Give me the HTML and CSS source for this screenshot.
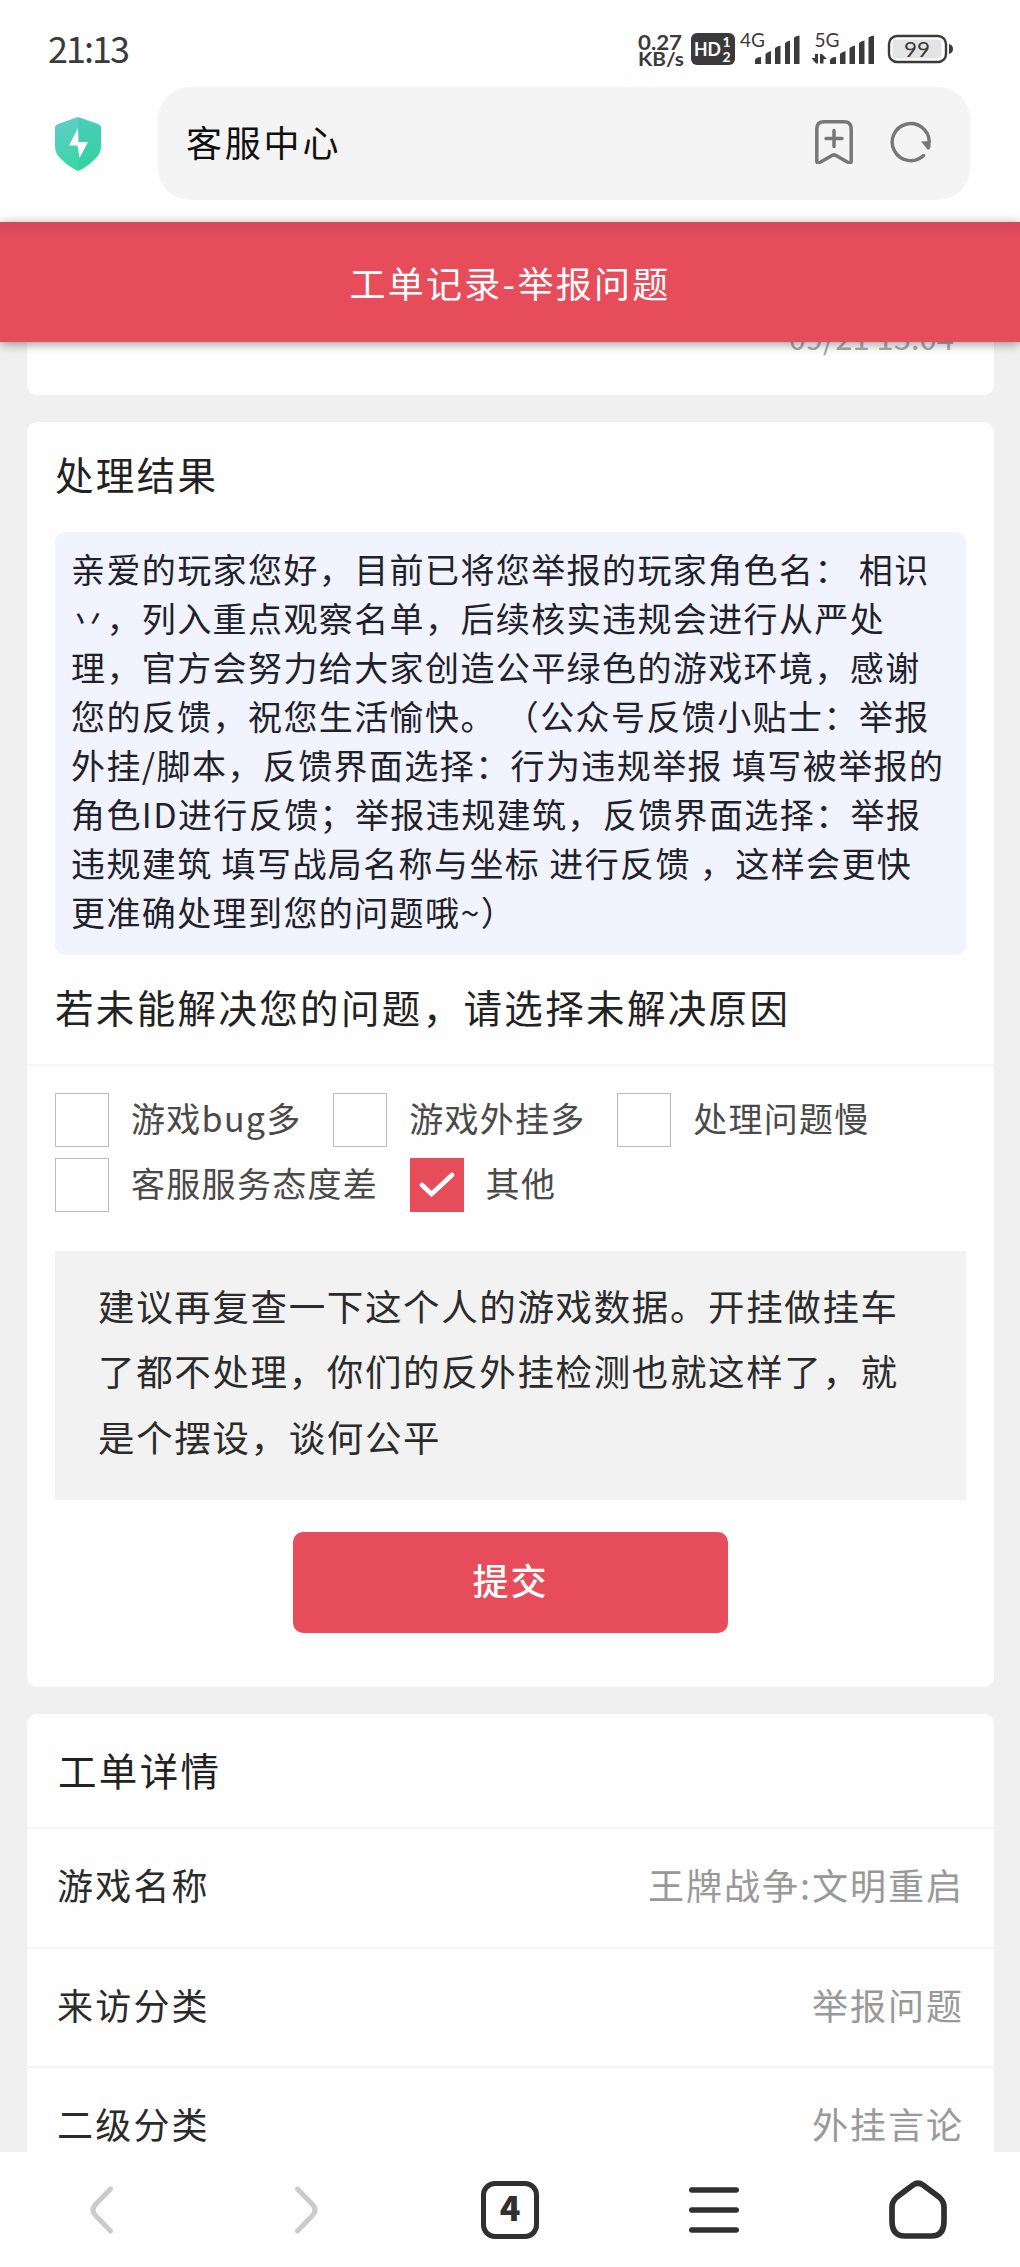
FILE: index.html
```html
<!DOCTYPE html>
<html lang="zh-CN">
<head>
  <meta charset="UTF-8">
  <title>客服中心</title>
  <meta name="viewport" content="width=device-width, initial-scale=1.0">
  <link rel="stylesheet" href="styles.css">
</head>
<body>
<div class="screen">

  <div class="status-bar">
    <span class="clock">21:13</span>
    <svg class="status-icons" width="320" height="44" viewBox="636 28 320 44" fill="#3a3a3a">
      <g font-weight="700">
        <text x="638" y="49.5" font-size="21" textLength="44" lengthAdjust="spacingAndGlyphs">0.27</text>
        <text x="638" y="66" font-size="18.5" textLength="46" lengthAdjust="spacingAndGlyphs">KB/s</text>
      </g>
      <rect x="691" y="33" width="44" height="32" rx="6"/>
      <g fill="#fff" font-weight="700">
        <text x="694" y="56" font-size="19" textLength="27" lengthAdjust="spacingAndGlyphs">HD</text>
        <text x="722.5" y="47" font-size="14">1</text>
        <text x="722.5" y="61.5" font-size="14">2</text>
      </g>
      <text x="740" y="46.5" font-size="19.5" textLength="25" lengthAdjust="spacingAndGlyphs">4G</text>
      <path d="M755 64v-4q1-3 6-3v7zM765.5 64v-10q2-2 5.5-3v13zM775 64V48q2-2 5.5-2.5V64zM785 64V43q2-2 5-2.5V64zM794 64V37.5q2-1.5 5.5-2V64z"/>
      <text x="814.5" y="46.5" font-size="19.5" textLength="25" lengthAdjust="spacingAndGlyphs">5G</text>
      <path d="M811.5 58h3.5v-4h3v9.5h-2zM820 63.5V54h2l5 5h-3.5v4.5z"/>
      <path d="M830 64v-4q1-3 6-3v7zM840 64v-10q2-2 5.5-3v13zM849.5 64V48q2-2 5.5-2.5V64zM859 64V43q2-2 5.5-2.5V64zM868.5 64V37.5q2-1.5 5.5-2V64z"/>
      <rect x="889" y="36" width="57" height="26" rx="8" fill="none" stroke="#3a3a3a" stroke-width="2.4"/>
      <rect x="892.5" y="39.5" width="49" height="19" rx="4" fill="#e4e4e4"/>
      <path d="M949 44q4 1 4 5t-4 5z"/>
      <text x="904" y="56.5" font-size="20.5" textLength="26" lengthAdjust="spacingAndGlyphs">99</text>
    </svg>
  </div>

  <div class="address-bar">
    <svg class="shield" width="48" height="54" viewBox="0 0 48 54">
      <defs>
        <linearGradient id="shieldFill" x1="0" y1="0" x2="0.3" y2="1">
          <stop offset="0" stop-color="#5fcdc9"/>
          <stop offset="1" stop-color="#39d6a4"/>
        </linearGradient>
      </defs>
      <path d="M24 0 44 7q3 1 3 4v18q0 8-6 13-8 8-17 12-9-4-17-12-6-5-6-13V11q0-3 3-4z" fill="url(#shieldFill)"/>
      <path d="M24 0 44 7q3 1 3 4v18q0 8-6 13-8 8-17 12z" fill="#28c99b" fill-opacity="0.25"/>
      <path d="M24 11 15 28.5h8.5L25.5 41 34 25h-9.5z" fill="#fff"/>
    </svg>
    <div class="address">
      <span class="address-title">客服中心</span>
      <svg width="38" height="44" viewBox="0 0 38 44" fill="none" stroke="#777" stroke-width="3.5" stroke-linecap="round" stroke-linejoin="round">
        <path d="M9 1.800h20q7.200 0 7.200 7.200v32q0 3-3 1.500L21 35.500q-2-1.200-4 0L4.800 42.500q-3 1.500-3-1.500V9q0-7.200 7.200-7.200z"/>
        <path d="M19 10.500v16M11 18.500h16"/>
      </svg>
      <svg width="42" height="42" viewBox="0 0 42 42">
        <path d="M39.200 21A18.500 18.500 0 1 0 33.500 34.500" fill="none" stroke="#777" stroke-width="3.4" stroke-linecap="round"/>
        <path d="M31 20.500 40.500 20v6q-1.200 3.500-3 2.500z" fill="#777"/>
      </svg>
    </div>
  </div>

  <header class="page-header">工单记录-举报问题</header>

  <main class="content">
    <section class="card card-time">09/21 15:04</section>

    <section class="card card-result">
      <h2>处理结果</h2>
      <div class="reply">
        亲爱的玩家您好，目前已将您举报的玩家角色名： 相识<br>
        丷，列入重点观察名单，后续核实违规会进行从严处<br>
        理，官方会努力给大家创造公平绿色的游戏环境，感谢<br>
        您的反馈，祝您生活愉快。 （公众号反馈小贴士：举报<br>
        外挂/脚本，反馈界面选择：行为违规举报 填写被举报的<br>
        角色ID进行反馈；举报违规建筑，反馈界面选择：举报<br>
        违规建筑 填写战局名称与坐标 进行反馈 ，这样会更快<br>
        更准确处理到您的问题哦~）
      </div>
      <h2 class="question">若未能解决您的问题，请选择未解决原因</h2>
      <div class="reasons">
        <label class="reason"><span class="box"></span><span class="reason-text">游戏bug多</span></label>
        <label class="reason"><span class="box"></span><span class="reason-text">游戏外挂多</span></label>
        <label class="reason"><span class="box"></span><span class="reason-text">处理问题慢</span></label>
        <label class="reason"><span class="box"></span><span class="reason-text">客服服务态度差</span></label>
        <label class="reason">
          <span class="box checked">
            <svg width="36" height="26" viewBox="0 0 36 26"><path d="M3 13 12.500 22 33 3" fill="none" stroke="#fff" stroke-width="4.6" stroke-linecap="round"/></svg>
          </span>
          <span class="reason-text">其他</span>
        </label>
      </div>
      <div class="comment">
        建议再复查一下这个人的游戏数据。开挂做挂车<br>
        了都不处理，你们的反外挂检测也就这样了，就<br>
        是个摆设，谈何公平
      </div>
      <button class="btn-submit">提交</button>
    </section>

    <section class="card card-detail">
      <h2>工单详情</h2>
      <div class="row"><span>游戏名称</span><span class="value">王牌战争:文明重启</span></div>
      <div class="row"><span>来访分类</span><span class="value">举报问题</span></div>
      <div class="row"><span>二级分类</span><span class="value">外挂言论</span></div>
    </section>
  </main>

  <nav class="toolbar">
    <a class="tool">
      <svg width="24" height="48" viewBox="0 0 24 48" fill="none" stroke="#cbcbcb" stroke-width="5" stroke-linecap="round"><path d="M20.500 3 6 18q-6 6 0 12l14.500 15"/></svg>
    </a>
    <a class="tool">
      <svg width="24" height="48" viewBox="0 0 24 48" fill="none" stroke="#cbcbcb" stroke-width="5" stroke-linecap="round"><path d="M3.500 3 18 18q6 6 0 12L3.500 45"/></svg>
    </a>
    <a class="tool"><span class="tab-count">4</span></a>
    <a class="tool">
      <svg width="50" height="46" viewBox="0 0 50 46" stroke="#303030" stroke-width="5.6" stroke-linecap="round"><path d="M2.800 3h44.400M2.800 23h44.400M2.800 43h44.400"/></svg>
    </a>
    <a class="tool">
      <svg width="60" height="60" viewBox="0 0 60 60" fill="none" stroke="#303030" stroke-width="5.7"><path d="M25 5q5-3.500 10 0L51 17q5 4.500 5 10v14q0 15-12.500 15h-27Q4 56 4 41V27q0-5.500 5-10z"/></svg>
    </a>
  </nav>

</div>
</body>
</html>
```

FILE: styles.css
```css
* {
  box-sizing: border-box;
}

body {
  margin: 0;
  background: #fefefe;
  color: #222;
  font-family: "Noto Sans CJK SC", sans-serif;
  text-spacing-trim: space-all;
}

.screen {
  display: flex;
  flex-direction: column;
  width: 1020px;
  height: 2267px;
  overflow: hidden;
}

/* phone status bar */
.status-bar {
  display: flex;
  justify-content: space-between;
  height: 87px;
  padding: 28px 64px 0 48px;
}

.clock {
  font-size: 36px;
  line-height: 38px;
  letter-spacing: -2px;
  color: #3a3a3a;
}

.status-icons {
  font-family: Lato, sans-serif;
}

/* browser address bar */
.address-bar {
  display: flex;
  align-items: center;
  height: 135px;
  padding: 0 50px 22px 54px;
}

.address {
  display: flex;
  align-items: center;
  flex: 1;
  height: 113px;
  margin-left: 56px;
  padding: 0 38px 3px 28px;
  border-radius: 32px;
  background: #f4f4f4;
}

.address-title {
  flex: 1;
  padding-bottom: 3px;
  font-size: 36px;
  letter-spacing: 2.8px;
  color: #111;
}

.address svg + svg {
  margin-left: 37px;
}

.page-header {
  position: relative;
  z-index: 1;
  height: 120px;
  flex-shrink: 0;
  background: linear-gradient(#d24858, #e74c5b 16px);
  box-shadow: 0 2px 10px rgba(0, 0, 0, 0.4);
  color: #fff;
  font-size: 36px;
  line-height: 121px;
  letter-spacing: 2.3px;
  text-align: center;
}

.content {
  flex: 1;
  min-height: 0;
  overflow: hidden;
  padding: 0 26px 0 27px;
  background: #f0f0f0;
}

.card {
  margin-bottom: 27px;
  border-radius: 10px;
  background: #fefefe;
}

.card h2 {
  margin: 0;
  font-size: 38.5px;
  font-weight: 400;
  letter-spacing: 2.35px;
  line-height: 54px;
}

.card-time {
  height: 113px;
  margin-top: -60px;
  padding: 32px 40px 0 0;
  color: #aaa;
  font-size: 31px;
  line-height: 46px;
  text-align: right;
}

.card-result {
  height: 1265px;
  padding-top: 24px;
}

.card-result h2 {
  padding-left: 28px;
}

.reply {
  height: 423px;
  margin: 32px 28px 0;
  padding: 12px 16px;
  border-radius: 10px;
  background: #f1f4fe;
  color: #1f222b;
  font-size: 34px;
  line-height: 49px;
  letter-spacing: 1.4px;
  white-space: nowrap;
}

.card-result .question {
  height: 111px;
  padding-top: 24px;
  border-bottom: 2px solid #f6f6f6;
}

.reasons {
  display: flex;
  flex-wrap: wrap;
  gap: 11px 31.5px;
  padding: 27px 28px 39px;
}

.reason {
  display: flex;
  align-items: center;
  height: 54px;
  font-size: 34px;
  letter-spacing: 1.3px;
  color: #4a4a4a;
}

.reason-text {
  padding-bottom: 5px;
}

.box {
  display: flex;
  align-items: center;
  justify-content: center;
  width: 54px;
  height: 54px;
  margin-right: 22px;
  border: 1.5px solid #bbb;
}

.box.checked {
  border: none;
  background: #e74c5b;
}

.comment {
  height: 249px;
  margin: 0 28px;
  padding: 22px 43px;
  background: #f2f2f2;
  color: #2b2b2b;
  font-size: 36.5px;
  line-height: 65.3px;
  letter-spacing: 1.63px;
  white-space: nowrap;
}

.btn-submit {
  display: block;
  width: 435px;
  height: 101px;
  margin: 32px auto 0;
  padding: 0 0 7px;
  border: none;
  border-radius: 10px;
  background: #e74c5b;
  color: #fff;
  font-family: inherit;
  font-size: 36px;
  font-weight: 500;
  letter-spacing: 2px;
}

.card-detail h2 {
  height: 113px;
  padding: 28px 0 0 31px;
}

.row {
  display: flex;
  justify-content: space-between;
  height: 119.7px;
  padding: 0 30px;
  border-top: 2px solid #f4f4f4;
  color: #2b2b2b;
  font-size: 36px;
  line-height: 110px;
  letter-spacing: 2.2px;
}

.value {
  color: #999;
  letter-spacing: 2px;
}

/* bottom browser toolbar */
.toolbar {
  display: flex;
  height: 115px;
  flex-shrink: 0;
  background: #fefefe;
}

.tool {
  display: flex;
  flex: 1;
  align-items: center;
  justify-content: center;
}

.tab-count {
  width: 58px;
  height: 58px;
  border: 5.5px solid #303030;
  border-radius: 14px;
  color: #303030;
  font-size: 34px;
  font-weight: 900;
  line-height: 41px;
  text-align: center;
}
```
